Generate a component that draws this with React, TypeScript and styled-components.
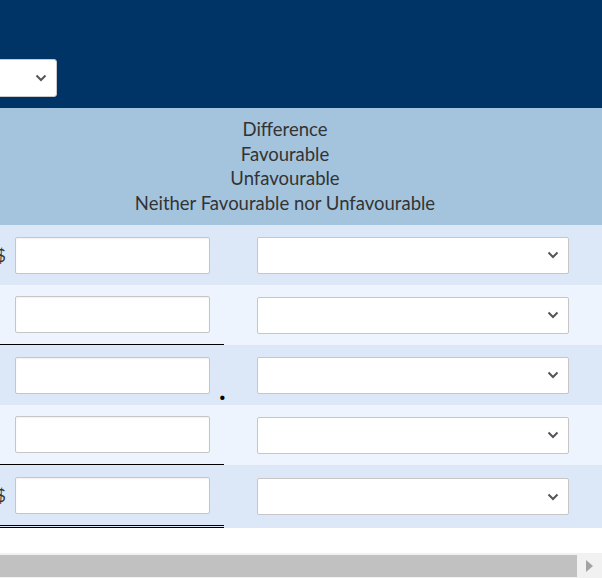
import React from 'react'
import styled, { createGlobalStyle } from 'styled-components'

const GlobalStyle = createGlobalStyle`
  html, body {
    margin: 0;
    padding: 0;
    background: #ffffff;
  }
  body {
    font-family: Lato, 'Liberation Sans', sans-serif;
    color: #333333;
    overflow: hidden;
  }
  * {
    box-sizing: border-box;
  }
`

const TopBar = styled.div`
  height: 108px;
  background: #003366;
  padding-top: 59px;
  overflow: hidden;
`

const TopSelect = styled.div`
  width: 120px;
  height: 38px;
  margin-left: -63px;
  background: #ffffff;
  border: 1px solid #c9c9c9;
  border-radius: 3px;
  display: flex;
  align-items: center;
  justify-content: flex-end;
  padding-right: 9px;
`

const HeadBand = styled.div`
  height: 117px;
  padding: 9px 0;
  background: #a4c4de;
`

const HeadText = styled.div`
  width: 570px;
  text-align: center;
  font-size: 18.5px;
  line-height: 24.65px;
  color: #333333;
`

const Row = styled.div<{ $shade: 'dark' | 'light'; $tall?: boolean }>`
  display: grid;
  grid-template-columns: 224px 33px 312px 1fr;
  align-items: center;
  height: ${(p) => (p.$tall ? '63px' : '60px')};
  background: ${(p) => (p.$shade === 'dark' ? '#dce8f7' : '#edf4fe')};
  overflow: hidden;
`

const AmountCell = styled.div<{ $rule?: 'single' | 'double' }>`
  align-self: stretch;
  display: flex;
  align-items: center;
  border-bottom: ${(p) =>
    p.$rule === 'single' ? '1px solid #000' : p.$rule === 'double' ? '3px double #000' : 'none'};
`

// narrow strip left of the input; the "$" is partly scrolled out of view
const CurrencySlot = styled.div`
  width: 15px;
  flex: none;
  overflow: visible;
`

const Currency = styled.span`
  display: inline-block;
  margin-left: -4px;
  font-size: 17px;
  color: #333333;
`

const AmountInput = styled.input`
  width: 195px;
  height: 37px;
  margin: 0;
  padding: 0 6px;
  border: 1px solid #c6c6c6;
  border-radius: 2px;
  background: #ffffff;
  box-shadow: inset 0 1px 2px rgba(0, 0, 0, 0.06);
  font-family: inherit;
  font-size: 16px;
  outline: none;
`

const Period = styled.span`
  align-self: flex-end;
  margin: 0 0 2px 9px;
  font-family: Lato, sans-serif;
  font-size: 28px;
  font-weight: 700;
  line-height: 28px;
  color: #000000;
`

const SelectBox = styled.div`
  grid-column: 3;
  height: 37px;
  border: 1px solid #c6c6c6;
  border-radius: 2px;
  background: #ffffff;
  display: flex;
  align-items: center;
  justify-content: flex-end;
  padding-right: 9px;
`

const Gap = styled.div`
  height: 25px;
`

const ScrollTrack = styled.div`
  height: 25px;
  background: #f1f1f1;
  display: flex;
  align-items: center;
`

const ScrollThumb = styled.div`
  flex: 1;
  height: 22px;
  background: #c1c1c1;
`

const ScrollButton = styled.div`
  width: 25px;
  display: flex;
  justify-content: center;
`

const Chevron = () => (
  <svg width="12" height="8" viewBox="0 0 12 8">
    <path d="M1.5 1.5 L6 6 L10.5 1.5" fill="none" stroke="#555" strokeWidth="2" />
  </svg>
)

const ArrowRight = () => (
  <svg width="7" height="12" viewBox="0 0 7 12">
    <polygon points="0,0 7,6 0,12" fill="#a3a3a3" />
  </svg>
)

type RowSpec = {
  shade: 'dark' | 'light'
  dollar?: boolean
  rule?: 'single' | 'double'
  period?: boolean
}

const rows: RowSpec[] = [
  { shade: 'dark', dollar: true },
  { shade: 'light', rule: 'single' },
  { shade: 'dark', period: true },
  { shade: 'light', rule: 'single' },
  { shade: 'dark', dollar: true, rule: 'double' },
]

const App: React.FC = () => {
  return (
    <>
      <GlobalStyle />
      <TopBar>
        <TopSelect>
          <Chevron />
        </TopSelect>
      </TopBar>

      <HeadBand>
        <HeadText>
          Difference
          <br />
          Favourable
          <br />
          Unfavourable
          <br />
          Neither Favourable nor Unfavourable
        </HeadText>
      </HeadBand>

      {rows.map((r, i) => (
        <Row key={i} $shade={r.shade} $tall={r.rule === 'double'}>
          <AmountCell $rule={r.rule}>
            <CurrencySlot>{r.dollar && <Currency>$</Currency>}</CurrencySlot>
            <AmountInput type="text" aria-label={`amount ${i + 1}`} />
            {r.period && <Period>.</Period>}
          </AmountCell>
          <SelectBox>
            <Chevron />
          </SelectBox>
        </Row>
      ))}

      <Gap />
      <ScrollTrack>
        <ScrollThumb />
        <ScrollButton>
          <ArrowRight />
        </ScrollButton>
      </ScrollTrack>
    </>
  )
}

export default App
